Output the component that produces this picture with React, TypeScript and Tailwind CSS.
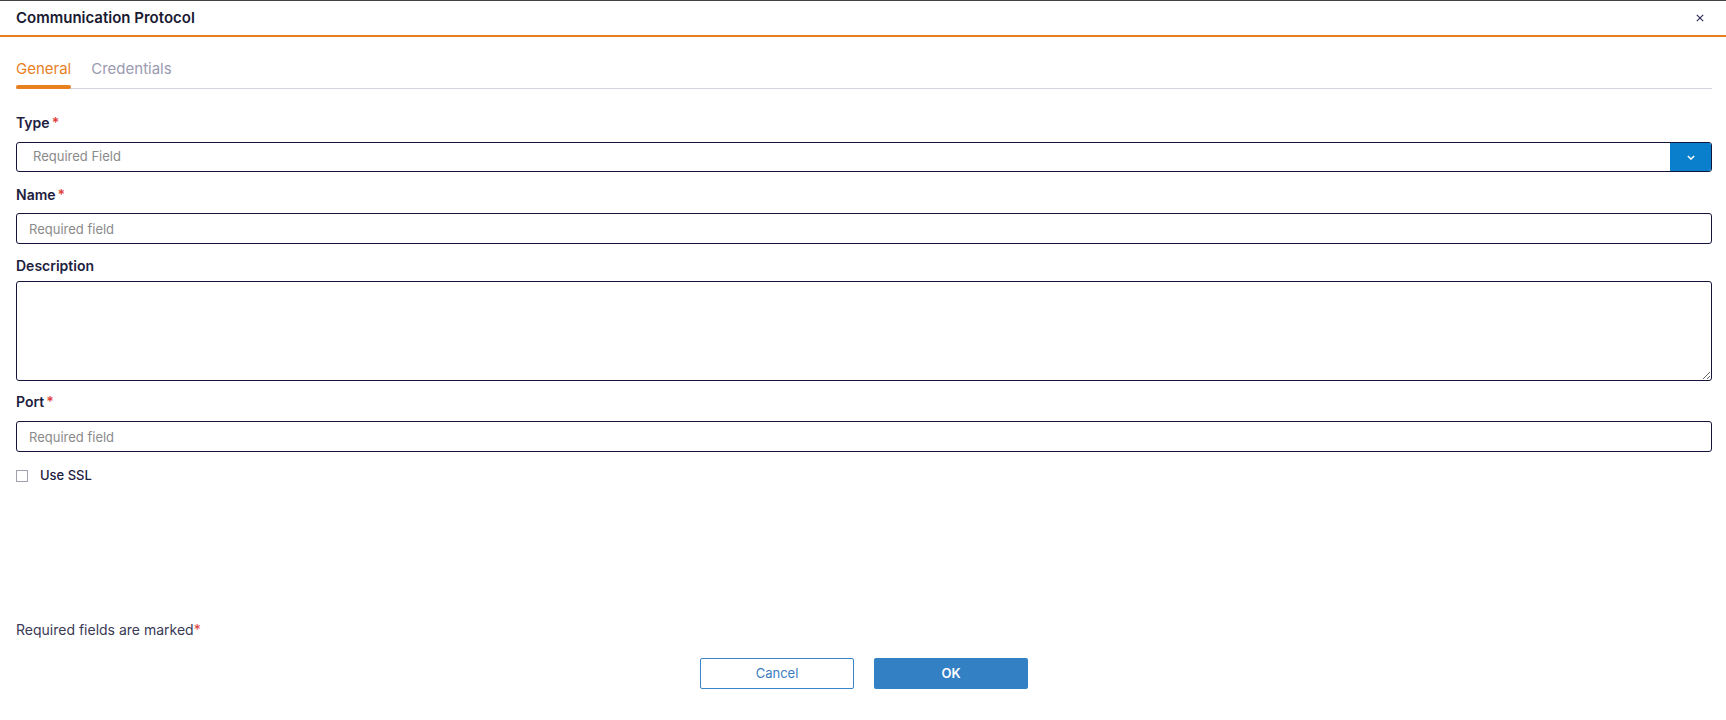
import { useState } from 'react';

function Label({ text, required }: { text: string; required?: boolean }) {
  return (
    <label className="block h-[20px] text-[14px] font-semibold leading-[20px] text-[#1e2040]">
      {text}
      {required && <span className="ml-[2px] text-[#e0403a]">*</span>}
    </label>
  );
}

export default function App() {
  const [tab, setTab] = useState('general');
  const [ssl, setSsl] = useState(false);

  return (
    <div
      className="flex h-[720px] w-full flex-col border-t border-[#444444] bg-white"
      style={{ fontFamily: 'Inter, "Noto Sans", sans-serif' }}
    >
      {/* Header */}
      <div className="flex h-[36px] items-center justify-between border-b-2 border-[#e8801f] pl-[16px] pr-[20px]">
        <h2 className="text-[15px] font-semibold text-[#1a1a33]">Communication Protocol</h2>
        <button className="flex h-[12px] w-[12px] items-center justify-center text-[#2a2a55]">
          <svg viewBox="0 0 10 10" className="h-[8px] w-[8px]" fill="none" stroke="currentColor" strokeWidth="1.4">
            <path d="M1 1L9 9M9 1L1 9" />
          </svg>
        </button>
      </div>

      {/* Body */}
      <div className="flex flex-1 flex-col pl-[16px] pr-[14px]">
        {/* Tabs */}
        <div className="mt-[23px] flex gap-[20px] border-b border-[#d3d3e3]">
          <button
            onClick={() => setTab('general')}
            className={`relative pb-[10px] text-[15px] leading-[18px] ${tab === 'general' ? 'text-[#e8801f]' : 'text-[#9a9ab0]'}`}
          >
            General
            {tab === 'general' && (
              <span className="absolute bottom-[-1px] left-0 right-0 h-[4px] rounded-full bg-[#e8801f]" />
            )}
          </button>
          <button
            onClick={() => setTab('credentials')}
            className={`relative pb-[10px] text-[15px] leading-[18px] ${tab === 'credentials' ? 'text-[#e8801f]' : 'text-[#9a9ab0]'}`}
          >
            Credentials
            {tab === 'credentials' && (
              <span className="absolute bottom-[-1px] left-0 right-0 h-[4px] rounded-full bg-[#e8801f]" />
            )}
          </button>
        </div>

        {/* Type */}
        <div className="mt-[24px]">
          <Label text="Type" required />
        </div>
        <div className="mt-[9px] flex h-[30px] overflow-hidden rounded-[3px] border border-[#14143c]">
          <div className="flex flex-1 items-center pl-[16px] text-[13px] text-[#8a8a8a]">Required Field</div>
          <div className="flex w-[41px] items-center justify-center bg-[#0a80cc]">
            <svg viewBox="0 0 10 6" className="h-[5px] w-[8px]" fill="none" stroke="white" strokeWidth="1.8">
              <path d="M1 1L5 5L9 1" />
            </svg>
          </div>
        </div>

        {/* Name */}
        <div className="mt-[13px]">
          <Label text="Name" required />
        </div>
        <input
          placeholder="Required field"
          className="mt-[8px] h-[31px] rounded-[3px] border border-[#14143c] px-[12px] text-[13px] text-[#333] outline-none placeholder:text-[#8a8a8a]"
        />

        {/* Description */}
        <div className="mt-[12px]">
          <Label text="Description" />
        </div>
        <textarea className="mt-[5px] h-[100px] rounded-[3px] border border-[#14143c] px-[12px] py-[6px] text-[13px] outline-none" />

        {/* Port */}
        <div className="mt-[11px]">
          <Label text="Port" required />
        </div>
        <input
          placeholder="Required field"
          className="mt-[9px] h-[31px] rounded-[3px] border border-[#14143c] px-[12px] text-[13px] text-[#333] outline-none placeholder:text-[#8a8a8a]"
        />

        {/* Use SSL */}
        <label className="mt-[14px] flex cursor-pointer items-center gap-[12px]">
          <span
            onClick={() => setSsl(!ssl)}
            className={`h-[12px] w-[12px] border border-[#a0a0b0] ${ssl ? 'bg-[#0a80cc]' : 'bg-white'}`}
          />
          <span className="text-[13px] font-medium text-[#1e2040]">Use SSL</span>
        </label>

        <div className="flex-1" />

        {/* Footer */}
        <p className="text-[14px] text-[#3a3a55]">
          Required fields are marked<span className="text-[#e0403a]">*</span>
        </p>
        <div className="mb-[31px] mt-[18px] flex justify-center gap-[20px]">
          <button className="h-[31px] w-[154px] rounded-[2px] border border-[#3a85c8] bg-white text-[13px] text-[#3a7dc0]">
            Cancel
          </button>
          <button className="h-[31px] w-[154px] rounded-[2px] bg-[#3380c4] text-[13px] font-semibold text-white">
            OK
          </button>
        </div>
      </div>
    </div>
  );
}
